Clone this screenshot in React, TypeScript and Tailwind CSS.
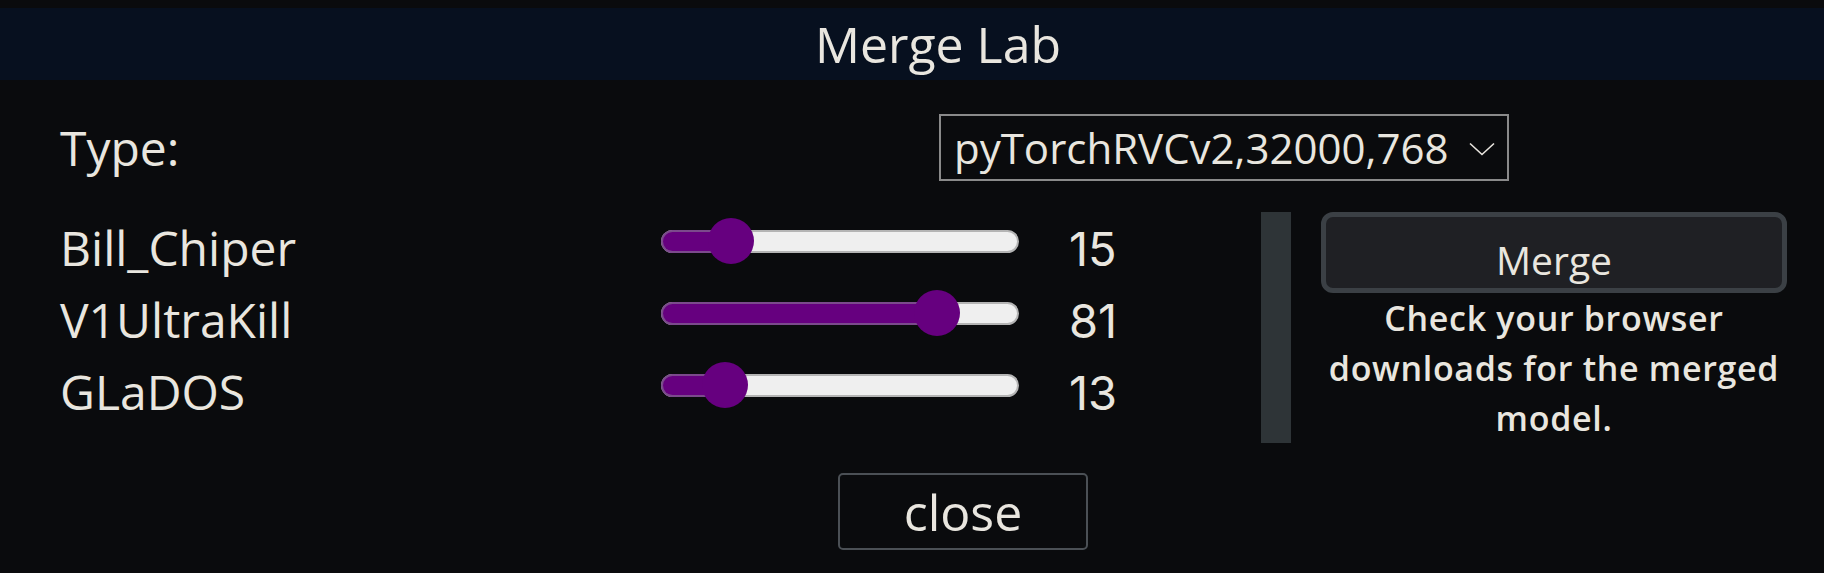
import React from "react";

const rows = [
  { name: "Bill_Chiper", v: 15 },
  { name: "V1UltraKill", v: 81 },
  { name: "GLaDOS", v: 13 },
];

function Slider({ value }: { value: number }) {
  const center = 23 + (value / 100) * 312;
  return (
    <div className="relative w-[358px] h-[46px] mb-[14px] flex items-center shrink-0">
      <div className="w-full h-[23px] rounded-full bg-[#efefef] border-2 border-[#b4b4b4]" />
      <div
        className="absolute left-0 top-[11.5px] h-[23px] rounded-l-full bg-[#66007f] border-2 border-r-0 border-[#7b4a8c]"
        style={{ width: center }}
      />
      <div
        className="absolute top-0 w-[46px] h-[46px] rounded-full bg-[#66007f]"
        style={{ left: center - 23 }}
      />
    </div>
  );
}

export default function App() {
  return (
    <div className="w-full h-[573px] bg-[#0a0b0d] pt-[8px] overflow-hidden font-['Open_Sans',sans-serif] text-[#e9e6df]">
      <div className="h-[72px] bg-[#07101f] flex items-center justify-center pl-[52px]">
        <span className="text-[50px] leading-none">Merge Lab</span>
      </div>

      <div className="flex items-center mt-[34px] pl-[60px] h-[67px]">
        <div className="w-[879px] text-[48px] leading-none">Type:</div>
        <div className="w-[570px] h-[67px] border-2 border-[#8a8a8a] flex items-center pl-[13px] pr-[12px]">
          <span className="flex-1 text-[42px] leading-none whitespace-nowrap">pyTorchRVCv2,32000,768</span>
          <svg width="26" height="14" viewBox="0 0 26 14" className="mt-[2px] shrink-0">
            <path d="M1 1.5 L13 12.5 L25 1.5" fill="none" stroke="#e9e6df" strokeWidth="1.6" />
          </svg>
        </div>
      </div>

      <div className="flex mt-[31px] pl-[60px]">
        <div className="flex flex-col">
          {rows.map((r) => (
            <div key={r.name} className="flex items-center h-[72px]">
              <div className="w-[601px] text-[48px] leading-none whitespace-nowrap">{r.name}</div>
              <Slider value={r.v} />
              <div className="w-[242px] pl-[50px] text-[47px] leading-none font-['Inter',sans-serif]">{r.v}</div>
            </div>
          ))}
        </div>
        <div className="w-[30px] self-stretch bg-[#2e3437]" />
        <div className="w-[466px] ml-[30px] flex flex-col">
          <button className="h-[81px] w-full rounded-[12px] bg-[#1f2024] border-[5px] border-[#3b4045] text-[39px] leading-none text-[#e9e6df] pt-[14px] font-['Open_Sans',sans-serif]">
            Merge
          </button>
          <div className="text-[34px] font-semibold leading-[50px] tracking-[0.02em] text-center whitespace-nowrap">
            Check your browser
            <br />
            downloads for the merged
            <br />
            model.
          </div>
        </div>
      </div>

      <div className="mt-[30px] ml-[838px] w-[250px] h-[77px] border-2 border-[#4b5055] rounded-[5px] flex items-center justify-center">
        <span className="text-[50px] leading-none">close</span>
      </div>
    </div>
  );
}
